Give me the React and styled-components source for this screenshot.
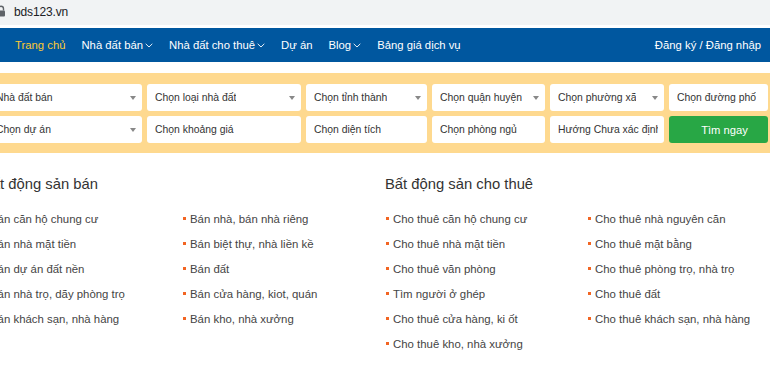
import React from "react";
import styled, { createGlobalStyle } from "styled-components";

const GlobalStyle = createGlobalStyle`
  html, body {
    margin: 0;
    padding: 0;
    background: #fff;
    overflow: hidden;
  }
  body {
    font-family: "Liberation Sans", Arial, sans-serif;
    color: #333;
  }
`;

const saleLeft = [
  "Bán căn hộ chung cư",
  "Bán nhà mặt tiền",
  "Bán dự án đất nền",
  "Bán nhà trọ, dãy phòng trọ",
  "Bán khách sạn, nhà hàng",
];
const saleRight = [
  "Bán nhà, bán nhà riêng",
  "Bán biệt thự, nhà liền kề",
  "Bán đất",
  "Bán cửa hàng, kiot, quán",
  "Bán kho, nhà xưởng",
];
const rentLeft = [
  "Cho thuê căn hộ chung cư",
  "Cho thuê nhà mặt tiền",
  "Cho thuê văn phòng",
  "Tìm người ở ghép",
  "Cho thuê cửa hàng, ki ốt",
  "Cho thuê kho, nhà xưởng",
];
const rentRight = [
  "Cho thuê nhà nguyên căn",
  "Cho thuê mặt bằng",
  "Cho thuê phòng trọ, nhà trọ",
  "Cho thuê đất",
  "Cho thuê khách sạn, nhà hàng",
];

const menu = [
  { label: "Trang chủ", active: true },
  { label: "Nhà đất bán", drop: true },
  { label: "Nhà đất cho thuê", drop: true },
  { label: "Dự án" },
  { label: "Blog", drop: true },
  { label: "Bảng giá dịch vụ" },
];

const fields = [
  { label: "Nhà đất bán", arrow: true },
  { label: "Chọn loại nhà đất", arrow: true },
  { label: "Chọn tỉnh thành", arrow: true },
  { label: "Chọn quận huyện", arrow: true },
  { label: "Chọn phường xã", arrow: true },
  { label: "Chọn đường phố" },
  { label: "Chọn dự án", arrow: true },
  { label: "Chọn khoảng giá" },
  { label: "Chọn diện tích" },
  { label: "Chọn phòng ngủ" },
  { label: "Hướng Chưa xác định" },
];

function Chevron() {
  return (
    <svg width="8" height="5" viewBox="0 0 8 5">
      <path d="M0.7 0.8 L4 4 L7.3 0.8" fill="none" stroke="#fff" strokeWidth="0.9" />
    </svg>
  );
}

function Lock() {
  return (
    <svg width="10" height="12" viewBox="0 0 10 12">
      <path d="M2.5 5.5 V3.8 A2.5 2.5 0 0 1 7.5 3.8 V5.5" fill="none" stroke="#5f6368" strokeWidth="1.4" />
      <rect x="1" y="5.5" width="8" height="6" rx="1" fill="#5f6368" />
    </svg>
  );
}

function LinkList({ items }) {
  return (
    <List>
      {items.map((t) => (
        <Item key={t}>
          <Bullet />
          {t}
        </Item>
      ))}
    </List>
  );
}

export default function App() {
  return (
    <Page>
      <GlobalStyle />
      <AddressBar>
        <LockSlot>
          <Lock />
        </LockSlot>
        <Url>bds123.vn</Url>
      </AddressBar>

      <NavBar>
        <Menu>
          {menu.map((m) => (
            <MenuItem key={m.label} $active={m.active}>
              {m.label}
              {m.drop && <Chevron />}
            </MenuItem>
          ))}
        </Menu>
        <MenuItem>Đăng ký / Đăng nhập</MenuItem>
      </NavBar>

      <SearchBand>
        <SearchGrid>
          {fields.map((f) => (
            <Field key={f.label}>
              <FieldText>{f.label}</FieldText>
              {f.arrow && <Caret />}
            </Field>
          ))}
          <SearchButton>Tìm ngay</SearchButton>
        </SearchGrid>
      </SearchBand>

      <Content>
        <Section>
          <Heading>Bất động sản bán</Heading>
          <Columns $col={200}>
            <LinkList items={saleLeft} />
            <LinkList items={saleRight} />
          </Columns>
        </Section>
        <Section>
          <Heading>Bất động sản cho thuê</Heading>
          <Columns $col={202}>
            <LinkList items={rentLeft} />
            <LinkList items={rentRight} />
          </Columns>
        </Section>
      </Content>
    </Page>
  );
}

const Page = styled.div`
  width: 770px;
  height: 375px;
  overflow: hidden;
  background: #fff;
`;

const AddressBar = styled.div`
  height: 25px;
  background: #f1f3f4;
  display: flex;
  align-items: center;
  border-bottom: 3px solid #fff;
`;

const LockSlot = styled.div`
  flex: none;
  width: 10px;
  height: 12px;
  margin-left: -4px;
  margin-top: -3px;
  display: flex;
`;

const Url = styled.span`
  margin-left: 8px;
  font-size: 12px;
  color: #202124;
  letter-spacing: -0.15px;
  margin-top: -2px;
`;

const NavBar = styled.nav`
  height: 34px;
  background: #00579f;
  display: flex;
  align-items: center;
  justify-content: space-between;
  padding: 0 9px 0 15px;
`;

const Menu = styled.div`
  display: flex;
  align-items: center;
  gap: 16px;
`;

const MenuItem = styled.a`
  display: flex;
  align-items: center;
  gap: 2px;
  font-size: 11.3px;
  color: ${(p) => (p.$active ? "#fcc934" : "#fff")};
  white-space: nowrap;
  cursor: pointer;
`;

const SearchBand = styled.div`
  margin-top: 11px;
  background: #fed98f;
  padding: 11px 0 10px;
  overflow: hidden;
`;

const SearchGrid = styled.div`
  margin-left: -12px;
  display: grid;
  grid-template-columns: 154px 154px 121px 113px 114px 99px;
  grid-auto-rows: 27px;
  gap: 5px;
`;

const Field = styled.div`
  background: #fff;
  border-radius: 3px;
  display: flex;
  align-items: center;
  justify-content: space-between;
  padding: 0 6px 0 8px;
  min-width: 0;
  overflow: hidden;
`;

const FieldText = styled.span`
  font-size: 10.4px;
  color: #333;
  white-space: nowrap;
  overflow: hidden;
`;

const Caret = styled.span`
  flex: none;
  width: 0;
  height: 0;
  border-left: 3.5px solid transparent;
  border-right: 3.5px solid transparent;
  border-top: 4px solid #888;
  margin-left: 4px;
`;

const SearchButton = styled.button`
  border: none;
  border-radius: 3px;
  background: #28a745;
  color: #fff;
  font-family: "Liberation Sans", Arial, sans-serif;
  font-size: 11.2px;
  padding: 0 0 0 12px;
  text-align: center;
`;

const Content = styled.div`
  margin-left: -18px;
  display: flex;
`;

const Section = styled.section`
  width: 403px;
  flex: none;
`;

const Heading = styled.h2`
  margin: 22px 0 0;
  font-size: 14.8px;
  font-weight: 400;
  color: #333;
  line-height: 18px;
`;

const Columns = styled.div`
  display: grid;
  grid-template-columns: ${(p) => `${p.$col}px ${p.$col}px`};
  margin-top: 13px;
`;

const List = styled.ul`
  list-style: none;
  margin: 0;
  padding: 0 0 0 1px;
`;

const Item = styled.li`
  display: flex;
  align-items: center;
  gap: 4px;
  height: 25px;
  font-size: 11.4px;
  color: #444;
  white-space: nowrap;
`;

const Bullet = styled.span`
  width: 3px;
  height: 3px;
  background: #f26522;
  flex: none;
`;
